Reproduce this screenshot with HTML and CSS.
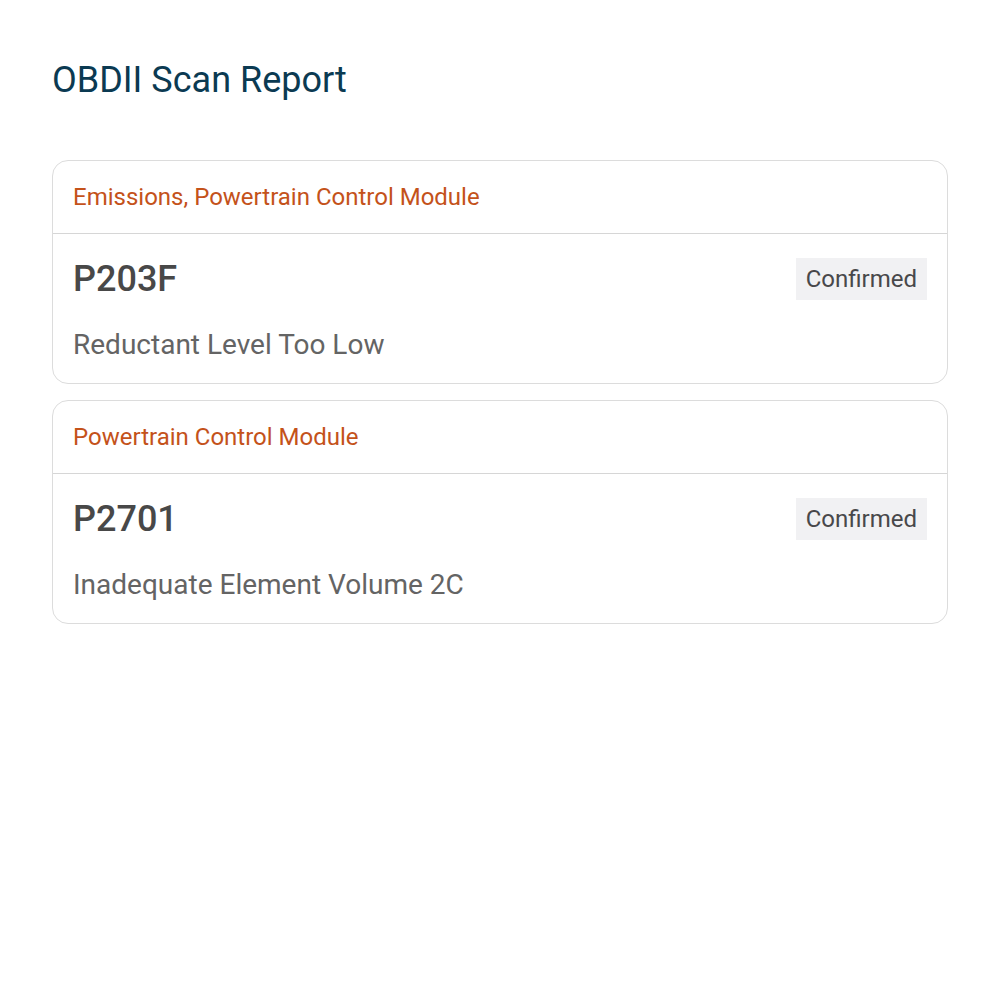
FILE: index.html
```html
<!DOCTYPE html>
<html lang="en">
<head>
    <meta charset="UTF-8">
    <meta name="viewport" content="width=device-width, initial-scale=1.0">
    <title>OBDII Scan Report</title>
    <link rel="stylesheet" href="styles.css">
</head>
<body>

    <h1 class="title">OBDII Scan Report</h1>

    <!-- 故障码列表 -->
    <div class="report-list">
        <div class="code-card">
            <div class="card-header">Emissions, Powertrain Control Module</div>
            <div class="card-body">
                <div class="code-row">
                    <span class="code">P203F</span>
                    <span class="badge">Confirmed</span>
                </div>
                <div class="desc">Reductant Level Too Low</div>
            </div>
        </div>

        <div class="code-card">
            <div class="card-header">Powertrain Control Module</div>
            <div class="card-body">
                <div class="code-row">
                    <span class="code">P2701</span>
                    <span class="badge">Confirmed</span>
                </div>
                <div class="desc">Inadequate Element Volume 2C</div>
            </div>
        </div>
    </div>

</body>
</html>
```

FILE: styles.css
```css
body {
    font-family: Roboto, "Noto Sans", Arial, sans-serif;
    margin: 0;
    padding: 56px 52px;
    background-color: #fff;
}

.title {
    margin: 0 0 56px 0;
    font-size: 36px;
    font-weight: 400;
    line-height: 48px;
    color: #0b3a52;
}

.report-list {
    display: flex;
    flex-direction: column;
    gap: 16px;
}

.code-card {
    border: 1px solid #dcdcdc;
    border-radius: 16px;
    background-color: #fff;
}

.card-header {
    padding: 20px 20px;
    font-size: 24px;
    line-height: 32px;
    color: #c4521a;
    border-bottom: 1px solid #d6d6d6;
}

.card-body {
    padding: 24px 20px 21px 20px;
}

.code-row {
    display: flex;
    justify-content: space-between;
    align-items: center;
}

.code {
    font-size: 36px;
    font-weight: 500;
    color: #484848;
    line-height: 42px;
}

.badge {
    background-color: #f1f1f3;
    color: #48484a;
    font-size: 24px;
    line-height: 42px;
    padding: 0 10px;
}

.desc {
    margin-top: 28px;
    font-size: 28px;
    line-height: 34px;
    color: #646464;
}
```
